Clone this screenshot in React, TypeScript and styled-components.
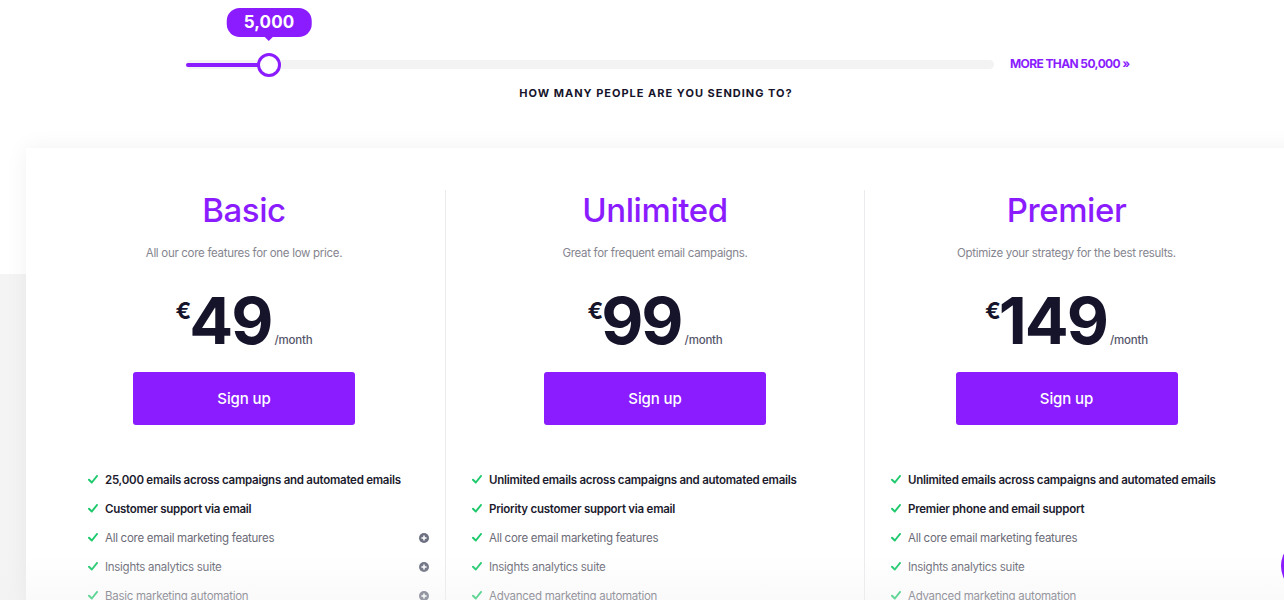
import React from "react";
import styled, { createGlobalStyle } from "styled-components";

const PURPLE = "#8a1cff";
const INK = "#16142b";

const GlobalStyle = createGlobalStyle`
  html, body {
    margin: 0;
    padding: 0;
  }
  body {
    font-family: Inter, "Open Sans", Arial, sans-serif;
    background: linear-gradient(#ffffff 0, #ffffff 274px, #f4f4f4 274px);
    min-height: 600px;
    overflow: hidden;
    -webkit-font-smoothing: antialiased;
  }
`;

const Page = styled.div`
  width: 1284px;
  height: 600px;
  overflow: hidden;
  position: relative;
`;

const SliderArea = styled.div`
  display: flex;
  align-items: center;
  gap: 16px;
  padding: 57px 0 0 186px;
`;

const Track = styled.div`
  position: relative;
  width: 808px;
  height: 9px;
  border-radius: 5px;
  background: #f3f3f4;
  display: flex;
  align-items: center;
`;

const Fill = styled.div`
  height: 4px;
  border-radius: 2px;
  background: ${PURPLE};
  margin-top: 1px;
`;

const Thumb = styled.div`
  position: absolute;
  top: 50%;
  width: 24px;
  height: 24px;
  margin: -11px 0 0 -12px;
  box-sizing: border-box;
  border-radius: 50%;
  background: #fff;
  border: 3px solid ${PURPLE};
`;

const Bubble = styled.div`
  position: absolute;
  bottom: 32px;
  transform: translateX(-50%);
  height: 29px;
  padding: 0 17px;
  border-radius: 13px;
  background: ${PURPLE};
  color: #fff;
  font-size: 17px;
  font-weight: 700;
  line-height: 29px;
  letter-spacing: 0.1px;
  white-space: nowrap;

  &::after {
    content: "";
    position: absolute;
    left: 50%;
    bottom: -4px;
    margin-left: -4px;
    border-left: 4px solid transparent;
    border-right: 4px solid transparent;
    border-top: 4px solid ${PURPLE};
  }
`;

const MoreLink = styled.a`
  color: ${PURPLE};
  font-size: 12px;
  font-weight: 700;
  letter-spacing: -0.6px;
  text-decoration: none;
  margin-top: -1px;
`;

const Question = styled.div`
  margin-top: 14px;
  padding-left: 28px;
  text-align: center;
  font-size: 11px;
  line-height: 16px;
  font-weight: 700;
  letter-spacing: 1px;
  color: ${INK};
`;

const Card = styled.div`
  margin: 47px 0 0 26px;
  width: 1300px;
  padding-top: 42px;
  background: #fff;
  box-shadow: 0 0 22px rgba(0, 0, 0, 0.06);
  display: grid;
  grid-template-columns: 419px 419px 404px;
  min-height: 420px;
`;

const Column = styled.div<{ $padLeft: number; $divider?: boolean }>`
  display: flex;
  flex-direction: column;
  align-items: center;
  padding-left: ${(p) => p.$padLeft}px;
  border-left: ${(p) => (p.$divider ? "1px solid #ebebed" : "none")};
`;

const PlanName = styled.h2`
  margin: 0;
  font-size: 33px;
  line-height: 40px;
  font-weight: 500;
  color: ${PURPLE};
  letter-spacing: -0.4px;
`;

const Tagline = styled.p`
  margin: 14px 0 0;
  font-size: 11.5px;
  line-height: 18px;
  color: #85858f;
  letter-spacing: -0.3px;
`;

const PriceRow = styled.div`
  display: flex;
  align-items: baseline;
  margin-top: 26px;
  color: ${INK};
`;

const Currency = styled.span`
  align-self: flex-start;
  margin-top: 11px;
  margin-right: -2px;
  font-size: 23px;
  line-height: 24px;
  font-weight: 700;
`;

const Amount = styled.span`
  font-size: 65px;
  line-height: 65px;
  font-weight: 700;
  letter-spacing: -2px;
`;

const Per = styled.span`
  margin-left: 3px;
  font-size: 11.5px;
  font-weight: 500;
  color: #55556a;
  letter-spacing: -0.2px;
`;

const SignUp = styled.button`
  margin-top: 19px;
  width: 222px;
  height: 53px;
  border: none;
  border-radius: 3px;
  background: ${PURPLE};
  color: #fff;
  font-family: inherit;
  font-size: 15px;
  font-weight: 500;
  letter-spacing: -0.1px;
  cursor: pointer;
`;

const Features = styled.ul<{ $padLeft: number; $padRight: number }>`
  align-self: stretch;
  list-style: none;
  margin: 40px 0 0;
  padding: 0 ${(p) => p.$padRight}px 0 ${(p) => p.$padLeft}px;
`;

const Feature = styled.li<{ $strong?: boolean }>`
  display: flex;
  align-items: center;
  height: 29px;
  font-size: 11.5px;
  font-weight: ${(p) => (p.$strong ? 600 : 400)};
  color: ${(p) => (p.$strong ? "#1c1b2e" : "#6b6b77")};
  letter-spacing: ${(p) => (p.$strong ? "-0.25px" : "-0.28px")};
`;

const FeatureText = styled.span`
  flex: 1;
  margin-left: 7px;
`;

const Fade = styled.div`
  position: absolute;
  left: 0;
  right: 0;
  bottom: 0;
  height: 44px;
  pointer-events: none;
  background: linear-gradient(rgba(243, 243, 244, 0), rgba(240, 240, 241, 0.35));
`;

const ChatBubble = styled.div`
  position: absolute;
  left: 1281px;
  top: 538px;
  width: 56px;
  height: 56px;
  border-radius: 50%;
  background: ${PURPLE};
`;

const Check = () => (
  <svg width="10" height="9" viewBox="0 0 10 9" aria-hidden>
    <path
      d="M1 4.8 L3.8 7.5 L9 1"
      fill="none"
      stroke="#1dc96c"
      strokeWidth="2"
      strokeLinecap="round"
      strokeLinejoin="round"
    />
  </svg>
);

const PlusDot = () => (
  <svg width="10" height="10" viewBox="0 0 10 10" aria-hidden>
    <circle cx="5" cy="5" r="5" fill="#6c7080" />
    <path d="M5 2.4 V7.6 M2.4 5 H7.6" stroke="#fff" strokeWidth="1.5" />
  </svg>
);

type Plan = {
  name: string;
  tagline: string;
  price: string;
  padLeft: number;
  listLeft: number;
  listRight: number;
  expandable: boolean;
  features: { text: string; strong?: boolean }[];
};

const plans: Plan[] = [
  {
    name: "Basic",
    tagline: "All our core features for one low price.",
    price: "49",
    padLeft: 17,
    listLeft: 45,
    listRight: 16,
    expandable: true,
    features: [
      { text: "25,000 emails across campaigns and automated emails", strong: true },
      { text: "Customer support via email", strong: true },
      { text: "All core email marketing features" },
      { text: "Insights analytics suite" },
      { text: "Basic marketing automation" },
    ],
  },
  {
    name: "Unlimited",
    tagline: "Great for frequent email campaigns.",
    price: "99",
    padLeft: 0,
    listLeft: 26,
    listRight: 16,
    expandable: false,
    features: [
      { text: "Unlimited emails across campaigns and automated emails", strong: true },
      { text: "Priority customer support via email", strong: true },
      { text: "All core email marketing features" },
      { text: "Insights analytics suite" },
      { text: "Advanced marketing automation" },
    ],
  },
  {
    name: "Premier",
    tagline: "Optimize your strategy for the best results.",
    price: "149",
    padLeft: 0,
    listLeft: 26,
    listRight: 0,
    expandable: false,
    features: [
      { text: "Unlimited emails across campaigns and automated emails", strong: true },
      { text: "Premier phone and email support", strong: true },
      { text: "All core email marketing features" },
      { text: "Insights analytics suite" },
      { text: "Advanced marketing automation" },
    ],
  },
];

const App = () => {
  const value = 5000;
  const pos = 83; // px along the track for 5,000

  return (
    <>
      <GlobalStyle />
      <Page>
        <SliderArea>
          <Track>
            <Fill style={{ width: pos }} />
            <Thumb style={{ left: pos }} />
            <Bubble style={{ left: pos }}>{value.toLocaleString("en-US")}</Bubble>
          </Track>
          <MoreLink href="#">MORE THAN 50,000 »</MoreLink>
        </SliderArea>
        <Question>HOW MANY PEOPLE ARE YOU SENDING TO?</Question>

        <Card>
          {plans.map((plan, i) => (
            <Column key={plan.name} $padLeft={plan.padLeft} $divider={i > 0}>
              <PlanName>{plan.name}</PlanName>
              <Tagline>{plan.tagline}</Tagline>
              <PriceRow>
                <Currency>€</Currency>
                <Amount>{plan.price}</Amount>
                <Per>/month</Per>
              </PriceRow>
              <SignUp>Sign up</SignUp>
              <Features $padLeft={plan.listLeft} $padRight={plan.listRight}>
                {plan.features.map((f) => (
                  <Feature key={f.text} $strong={f.strong}>
                    <Check />
                    <FeatureText>{f.text}</FeatureText>
                    {plan.expandable && !f.strong && <PlusDot />}
                  </Feature>
                ))}
              </Features>
            </Column>
          ))}
        </Card>

        <Fade />
        <ChatBubble />
      </Page>
    </>
  );
};

export default App;
